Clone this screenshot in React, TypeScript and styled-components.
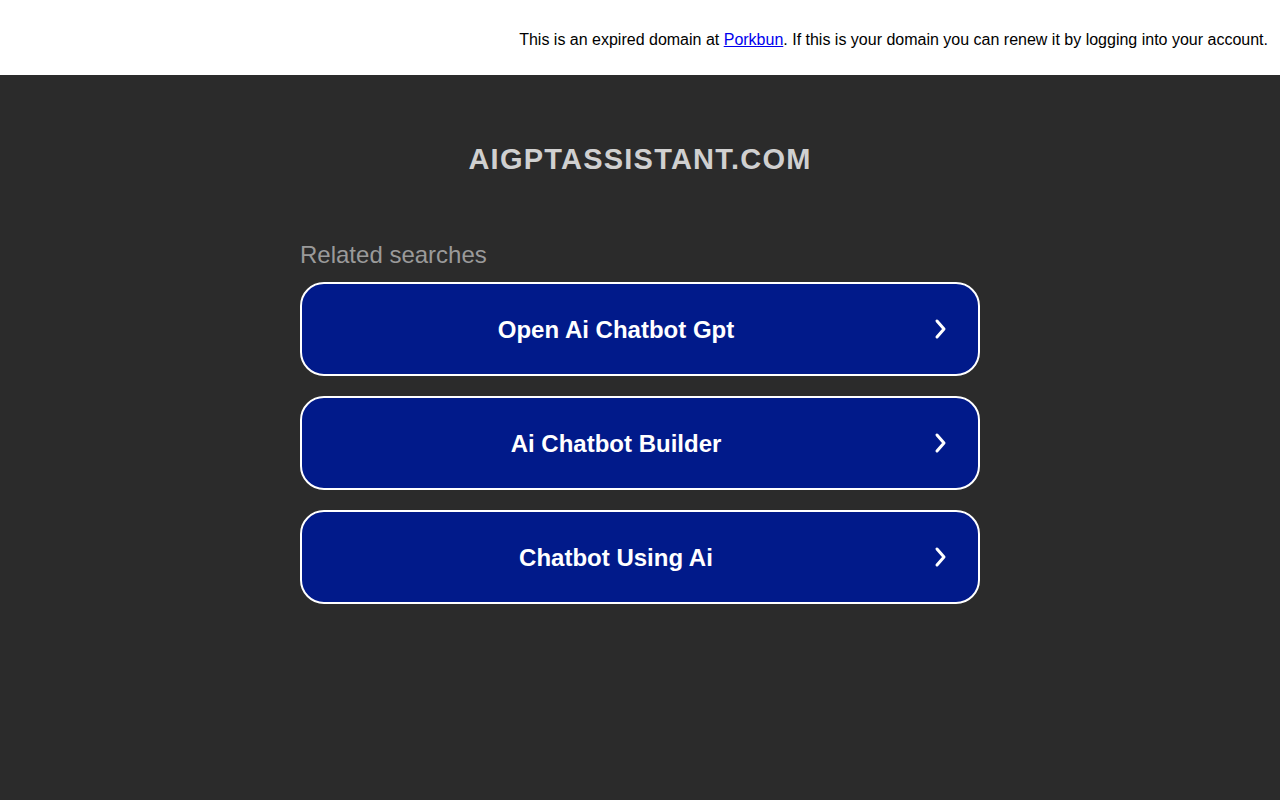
import React from "react";
import styled, { createGlobalStyle } from "styled-components";

const Global = createGlobalStyle`
  html, body { margin: 0; padding: 0; background: #2b2b2b; }
  body { font-family: "Liberation Sans", Arial, sans-serif; }
`;

const Header = styled.div`
  height: 75px;
  background: #fff;
  display: flex;
  align-items: center;
  justify-content: flex-end;
  padding: 4px 12px 0;
  box-sizing: border-box;
  font-size: 16px;
  color: #000;
  a { color: #0000ee; text-decoration: underline; }
`;

const Main = styled.div`
  height: 725px;
  background: #2b2b2b;
  display: flex;
  flex-direction: column;
  align-items: center;
`;

const Title = styled.h1`
  margin: 66px 0 0;
  font-size: 29px;
  font-weight: bold;
  color: #d0d0d0;
  letter-spacing: 1.22px;
  line-height: 36px;
`;

const Section = styled.div`
  width: 680px;
  margin-top: 64px;
  display: flex;
  flex-direction: column;
  gap: 20px;
`;

const Label = styled.div`
  font-size: 24px;
  color: #9a9a9a;
  line-height: 28px;
  margin-bottom: -7px;
`;

const Item = styled.a`
  height: 94px;
  box-sizing: border-box;
  border: 2px solid #fff;
  border-radius: 24px;
  background: #011a8a;
  display: flex;
  align-items: center;
  position: relative;
  color: #fff;
  text-decoration: none;
  font-size: 24px;
  font-weight: bold;
`;

const ItemText = styled.span`
  flex: 1;
  text-align: center;
  padding: 2px 48px 0 0;
`;

const Chevron = styled.svg`
  position: absolute;
  right: 29px;
  top: 50%;
  transform: translateY(-50%);
`;

const items = ["Open Ai Chatbot Gpt", "Ai Chatbot Builder", "Chatbot Using Ai"];

export default function App() {
  return (
    <>
      <Global />
      <Header>
        <span>
          This is an expired domain at <a href="#">Porkbun</a>. If this is your domain you can renew it by logging into your account.
        </span>
      </Header>
      <Main>
        <Title>AIGPTASSISTANT.COM</Title>
        <Section>
          <Label>Related searches</Label>
          {items.map((t) => (
            <Item key={t} href="#">
              <ItemText>{t}</ItemText>
              <Chevron width="16" height="24" viewBox="0 0 16 24">
                <path d="M4 4 L11 12 L4 20" fill="none" stroke="#fff" strokeWidth="3" strokeLinecap="round" strokeLinejoin="round" />
              </Chevron>
            </Item>
          ))}
        </Section>
      </Main>
    </>
  );
}
